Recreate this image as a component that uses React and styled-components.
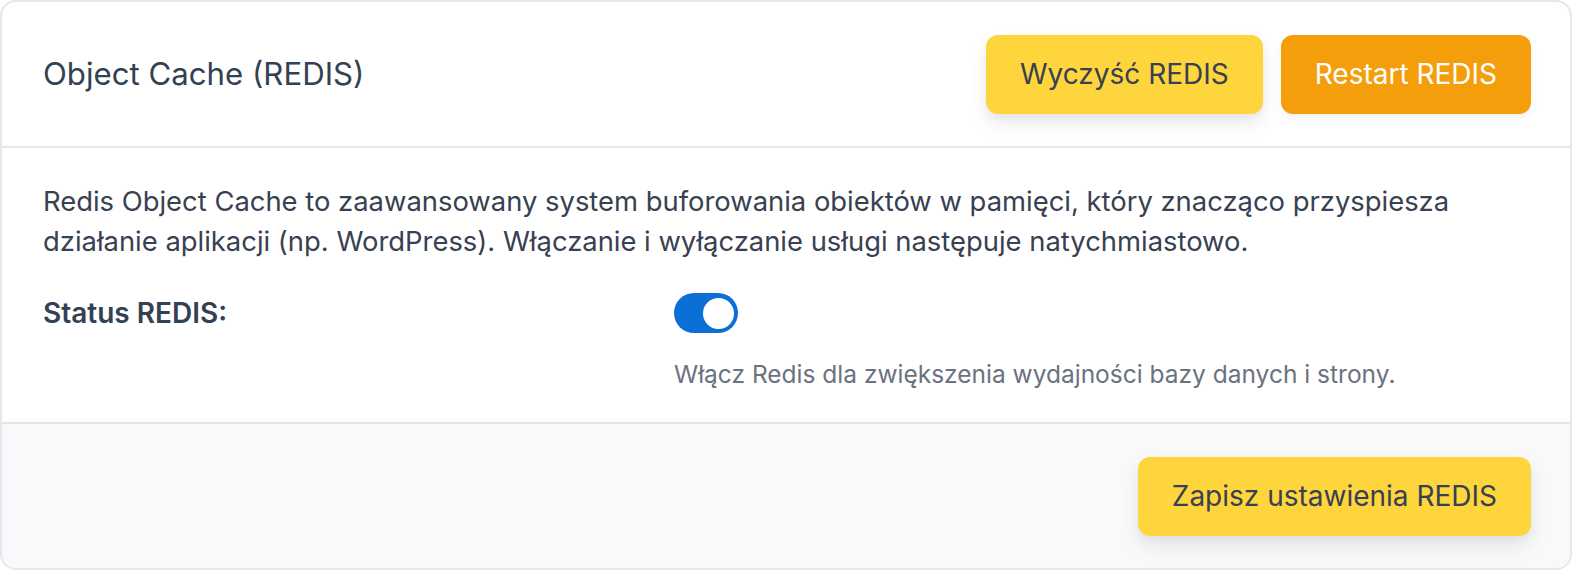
import styled, { createGlobalStyle } from 'styled-components';

const GlobalStyle = createGlobalStyle`
    body {
        margin: 0;
        background: #ffffff;
        font-family: Inter, "Noto Sans", sans-serif;
    }
`

const Card = styled.section`
    box-sizing: border-box;
    width: 1572px;
    height: 570px;
    border: 2px solid #e5e7eb;
    border-radius: 16px;
    background: #ffffff;
    overflow: hidden;
    display: flex;
    flex-direction: column;
`

const Header = styled.header`
    display: flex;
    align-items: center;
    justify-content: space-between;
    height: 144px;
    padding: 0 39px 0 41px;
    border-bottom: 2px solid #e5e7eb;
`

const Title = styled.h2`
    margin: 0;
    font-size: 31.2px;
    font-weight: 400;
    color: #334155;
`

const Actions = styled.div`
    display: flex;
    gap: 18px;
`

const Button = styled.button`
    height: 79px;
    padding: 0 34px;
    border: none;
    border-radius: 12px;
    font-family: Inter, "Noto Sans", sans-serif;
    font-size: 28px;
    font-weight: 400;
    cursor: pointer;
    background: ${p => (p.$variant === 'orange' ? '#f59e0b' : '#fed53c')};
    color: ${p => (p.$variant === 'orange' ? '#ffffff' : '#374151')};
    box-shadow: ${p => (p.$variant === 'orange'
        ? '0 4px 8px rgba(0, 0, 0, 0.05)'
        : '0 10px 20px rgba(0, 0, 0, 0.08), 0 4px 8px rgba(0, 0, 0, 0.04)')};
`

const Body = styled.div`
    padding: 33px 39px 33px 41px;
    border-bottom: 2px solid #e2e5ea;
`

const Description = styled.p`
    margin: 0;
    font-size: 27.4px;
    line-height: 40px;
    color: #374151;
`

const FieldRow = styled.div`
    display: grid;
    grid-template-columns: 631px 1fr;
    margin-top: 32px;
`

const Label = styled.span`
    font-size: 28px;
    font-weight: 600;
    color: #334155;
    line-height: 40px;
`

const Control = styled.div`
    display: flex;
    flex-direction: column;
    align-items: flex-start;
    gap: 26px;
`

const Toggle = styled.button`
    position: relative;
    width: 64px;
    height: 40px;
    padding: 0;
    border: none;
    border-radius: 20px;
    background: ${p => (p.$on ? '#0b6fd6' : '#d1d5db')};
    cursor: pointer;
`

const Knob = styled.span`
    position: absolute;
    top: 4.5px;
    left: ${p => (p.$on ? '28.5px' : '4.5px')};
    width: 31px;
    height: 31px;
    border-radius: 50%;
    background: #ffffff;
`

const Help = styled.p`
    margin: 0;
    font-size: 24.5px;
    line-height: 30px;
    color: #6b7280;
`

const Footer = styled.footer`
    flex: 1;
    display: flex;
    align-items: center;
    justify-content: flex-end;
    padding: 0 39px;
    background: #f8f9fb;
`

function App() {
    return (
        <>
            <GlobalStyle />
            <Card>
                <Header>
                    <Title>Object Cache (REDIS)</Title>
                    <Actions>
                        <Button>Wyczyść REDIS</Button>
                        <Button $variant="orange">Restart REDIS</Button>
                    </Actions>
                </Header>
                <Body>
                    <Description>
                        Redis Object Cache to zaawansowany system buforowania obiektów w pamięci, który znacząco przyspiesza
                        działanie aplikacji (np. WordPress). Włączanie i wyłączanie usługi następuje natychmiastowo.
                    </Description>
                    <FieldRow>
                        <Label>Status REDIS:</Label>
                        <Control>
                            <Toggle $on aria-label="Status REDIS">
                                <Knob $on />
                            </Toggle>
                            <Help>Włącz Redis dla zwiększenia wydajności bazy danych i strony.</Help>
                        </Control>
                    </FieldRow>
                </Body>
                <Footer>
                    <Button>Zapisz ustawienia REDIS</Button>
                </Footer>
            </Card>
        </>
    )
}

export default App;
